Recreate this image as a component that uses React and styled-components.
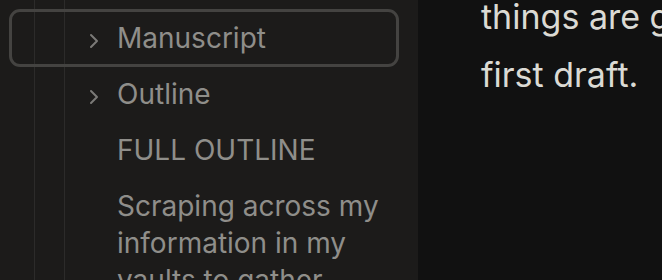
import styled, { createGlobalStyle } from "styled-components";

const GlobalStyle = createGlobalStyle`
  html, body {
    margin: 0;
    padding: 0;
    background: #111111;
  }
  body {
    font-family: Inter, "Noto Sans", sans-serif;
    -webkit-font-smoothing: antialiased;
  }
`;

const Layout = styled.div`
  display: flex;
  width: 662px;
  height: 280px;
  overflow: hidden;
`;

const Sidebar = styled.aside`
  width: 418px;
  flex-shrink: 0;
  background-color: #1c1b1a;
  background-image: linear-gradient(#2c2b2a, #2c2b2a),
    linear-gradient(#2c2b2a, #2c2b2a);
  background-size: 1px 100%, 1px 100%;
  background-position: 34px 0, 64px 0;
  background-repeat: no-repeat;
  padding: 10px 20px 0 10px;
  box-sizing: border-box;
`;

const Tree = styled.div`
  display: flex;
  flex-direction: column;
`;

const Row = styled.div`
  display: flex;
  align-items: flex-start;
  gap: 15px;
  padding: 9.5px 12px 9.5px ${(p) => (p.$icon ? "76px" : "107px")};
  border-radius: 10px;
  outline: ${(p) => (p.$focused ? "3px solid #444341" : "none")};
  outline-offset: -2px;
  color: #8f8e8a;
  font-size: 28px;
  line-height: 37px;
`;

const Chevron = styled.svg`
  width: 16px;
  height: 16px;
  flex-shrink: 0;
  margin-top: 13px;
  color: #7b7a77;
`;

const Label = styled.span`
  text-transform: ${(p) => (p.$upper ? "uppercase" : "none")};
`;

const Main = styled.main`
  flex: 1;
  padding-left: 63px;
  overflow: hidden;
`;

const Paragraph = styled.p`
  margin: -12px 0 0;
  color: #dbdad4;
  font-size: 34px;
  line-height: 58px;
  white-space: nowrap;
`;

function ChevronRight() {
  return (
    <Chevron viewBox="0 0 16 16" fill="none">
      <polyline
        points="5,2 11,8 5,14"
        stroke="currentColor"
        strokeWidth="2"
        strokeLinecap="round"
        strokeLinejoin="round"
      />
    </Chevron>
  );
}

export default function App() {
  return (
    <>
      <GlobalStyle />
      <Layout>
        <Sidebar>
          <Tree>
            <Row $icon $focused>
              <ChevronRight />
              <Label>Manuscript</Label>
            </Row>
            <Row $icon>
              <ChevronRight />
              <Label>Outline</Label>
            </Row>
            <Row>
              <Label $upper>Full Outline</Label>
            </Row>
            <Row>
              <Label>
                Scraping across my
                <br />
                information in my
                <br />
                vaults to gather
              </Label>
            </Row>
          </Tree>
        </Sidebar>
        <Main>
          <Paragraph>
            things are going well enough
            <br />
            first draft.
          </Paragraph>
        </Main>
      </Layout>
    </>
  );
}
